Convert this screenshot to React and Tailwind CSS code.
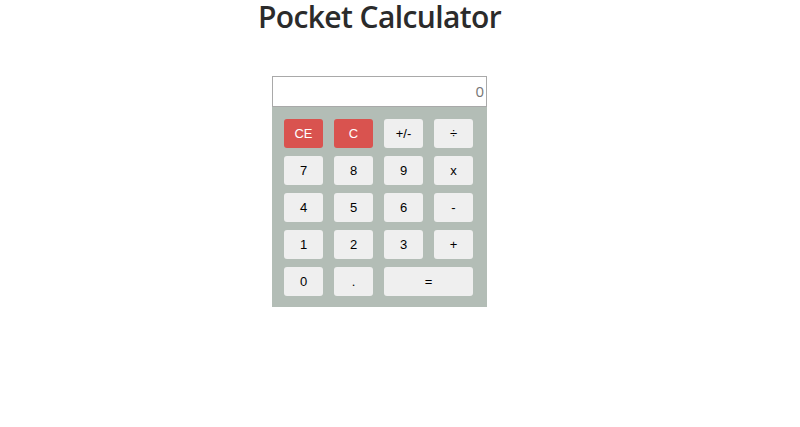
import React from "react";

const rows = [
  [["CE", "red"], ["C", "red"], ["+/-"], ["÷"]],
  [["7"], ["8"], ["9"], ["x"]],
  [["4"], ["5"], ["6"], ["-"]],
  [["1"], ["2"], ["3"], ["+"]],
  [["0"], ["."], ["=", "wide"]],
];

export default function App() {
  return (
    <div className="w-[759px] flex flex-col items-center bg-white min-h-[427px]">
      <h1
        className="text-[30px] font-semibold leading-[34px] tracking-[-0.6px] text-[#2b2b2b] mt-0"
        style={{ fontFamily: '"Open Sans", "Noto Sans", sans-serif' }}
      >
        Pocket Calculator
      </h1>
      <div className="mt-[42px] w-[215px] flex flex-col">
        <div
          className="h-[31px] border border-[#a9a9a9] bg-white flex items-center justify-end pr-[2px] text-[15px] text-[#757575]"
          style={{ fontFamily: '"Open Sans", "Noto Sans", sans-serif' }}
        >
          0
        </div>
        <div className="bg-[#b3bdb6] pl-[12px] pr-[14px] pt-[12px] pb-[11px] grid grid-cols-[39px_39px_39px_39px] gap-x-[11px] gap-y-[8px]">
          {rows.flat().map(([label, kind], i) => (
            <button
              key={i}
              className={
                "h-[29px] rounded-[3px] text-[13px] flex items-center justify-center " +
                (kind === "red"
                  ? "bg-[#d9534f] text-white"
                  : "bg-[#efefef] text-black") +
                (kind === "wide" ? " col-span-2" : "")
              }
              style={{ fontFamily: '"Liberation Sans", Arial, sans-serif' }}
            >
              {label}
            </button>
          ))}
        </div>
      </div>
    </div>
  );
}
